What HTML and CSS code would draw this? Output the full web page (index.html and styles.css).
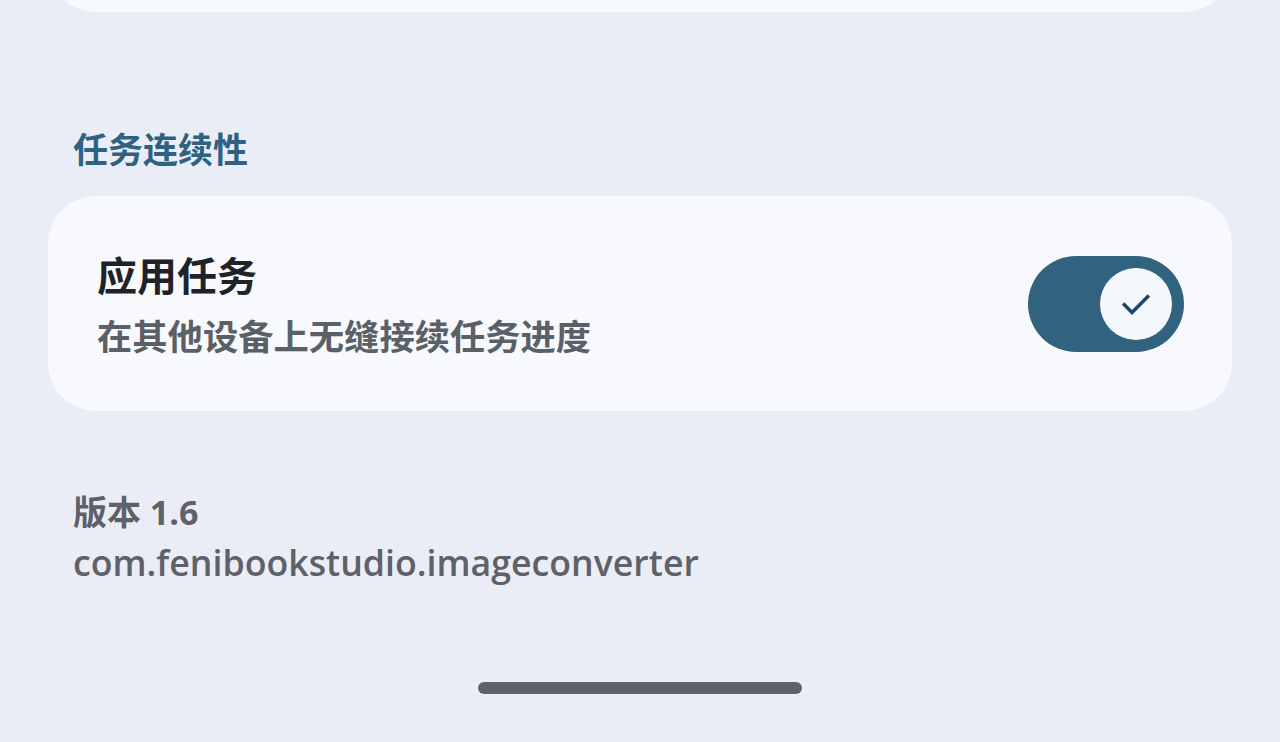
FILE: index.html
```html
<!DOCTYPE html>
<html lang="zh-CN">
<head>
    <meta charset="UTF-8">
    <meta name="viewport" content="width=device-width, initial-scale=1.0">
    <title>设置</title>
    <link rel="stylesheet" href="styles.css">
</head>
<body>
    <div class="screen">
        <div class="card card-top"></div>

        <h3 class="section-title">任务连续性</h3>
        <div class="card setting">
            <div class="setting-text">
                <div class="setting-name">应用任务</div>
                <div class="setting-desc">在其他设备上无缝接续任务进度</div>
            </div>
            <button class="switch on" id="taskSwitch" aria-pressed="true">
                <span class="thumb">
                    <svg class="check" viewBox="0 0 24 24" width="40" height="40">
                        <path d="M5 12.5l4.6 4.6L19 7.7" fill="none" stroke="currentColor" stroke-width="2.1" stroke-linecap="square"/>
                    </svg>
                </span>
            </button>
        </div>

        <div class="about">
            <div class="version">版本 1.6</div>
            <div class="package">com.fenibookstudio.imageconverter</div>
        </div>

        <div class="nav-handle"></div>
    </div>
    <script>
        document.getElementById('taskSwitch').onclick = function() {
            const on = this.classList.toggle('on');
            this.setAttribute('aria-pressed', on);
        };
    </script>
</body>
</html>
```

FILE: styles.css
```css
body {
    margin: 0;
    background: #eaedf5;
    font-family: "Open Sans", "Noto Sans CJK SC", sans-serif;
    overflow: hidden;
}

.screen {
    height: 742px;
    padding: 0 48px;
    display: flex;
    flex-direction: column;
}

.card {
    background: #f7f9fd;
    border-radius: 48px;
}

/* bottom of the previous group, scrolled mostly off screen */
.card-top {
    height: 112px;
    margin-top: -100px;
    flex-shrink: 0;
}

.section-title {
    margin: 113px 0 0 25px;
    font-size: 35px;
    line-height: 50px;
    font-weight: 700;
    color: #2f6282;
}

.setting {
    margin-top: 21px;
    height: 215px;
    box-sizing: border-box;
    padding: 0 48px 0 49px;
    display: flex;
    align-items: center;
    justify-content: space-between;
}

.setting-name {
    font-size: 40px;
    line-height: 52px;
    font-weight: 700;
    color: #1f2328;
}

.setting-desc {
    margin-top: 12px;
    font-size: 35.3px;
    line-height: 44px;
    font-weight: 700;
    color: #5b6067;
}

.switch {
    width: 156px;
    height: 96px;
    border: none;
    border-radius: 48px;
    padding: 0 12px;
    background: #dde1ea;
    display: flex;
    align-items: center;
    cursor: pointer;
}

.switch.on {
    background: #31637f;
    justify-content: flex-end;
}

.thumb {
    width: 72px;
    height: 72px;
    border-radius: 50%;
    background: #f4f7fc;
    color: #1b4a68;
    display: flex;
    align-items: center;
    justify-content: center;
}

.about {
    margin: 76px 0 0 25px;
    font-size: 34px;
    line-height: 50px;
    font-weight: 600;
    color: #5e6169;
}

.version {
    font-weight: 700;
}

.package {
    font-size: 35.7px;
}

.nav-handle {
    margin: 95px auto 0;
    width: 324px;
    height: 12px;
    border-radius: 6px;
    background: #606166;
}
```
